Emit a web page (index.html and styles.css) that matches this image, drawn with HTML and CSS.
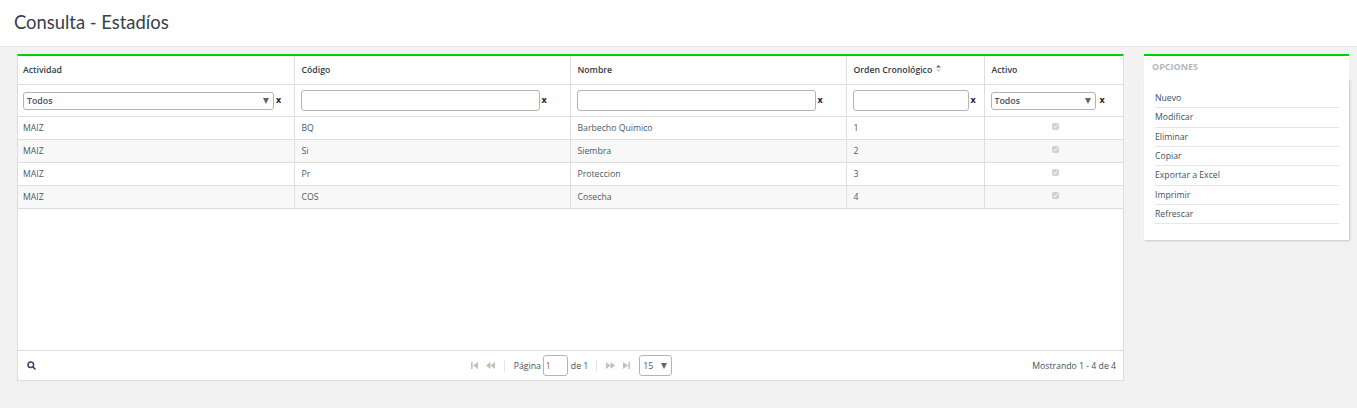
FILE: index.html
```html
<!DOCTYPE html>
<html lang="es">
<head>
<meta charset="utf-8">
<title>Consulta - Estadíos</title>
<link rel="stylesheet" href="styles.css">
</head>
<body>
<header class="page-head"><h1>Consulta - Estadíos</h1></header>
<main class="content">
  <section class="grid-panel">
    <div class="grid-body">
      <table class="grid">
        <colgroup><col class="c1"><col class="c2"><col class="c3"><col class="c4"><col class="c5"></colgroup>
        <thead>
          <tr class="head-row">
            <th>Actividad</th><th>Código</th><th>Nombre</th>
            <th>Orden Cronológico <svg class="sort" width="5" height="7" viewBox="0 0 5 7"><path d="M2.5 0L5 2.6H0z" fill="#666"/><path d="M2.5 7L0 4.4h5z" fill="#ccc"/></svg></th>
            <th>Activo</th>
          </tr>
          <tr class="filter-row">
            <td><div class="filter"><span class="select-wrap w-act"><select class="sel"><option>Todos</option></select></span><b class="clear">x</b></div></td>
            <td><div class="filter"><input class="txt w-text" type="text"><b class="clear">x</b></div></td>
            <td><div class="filter"><input class="txt w-text" type="text"><b class="clear">x</b></div></td>
            <td><div class="filter"><input class="txt w-ord" type="text"><b class="clear">x</b></div></td>
            <td><div class="filter"><span class="select-wrap w-on"><select class="sel"><option>Todos</option></select></span><b class="clear">x</b></div></td>
          </tr>
        </thead>
        <tbody>
          <tr><td>MAIZ</td><td>BQ</td><td>Barbecho Quimico</td><td>1</td><td class="chk"><input type="checkbox" checked disabled></td></tr>
          <tr class="alt"><td>MAIZ</td><td>Si</td><td>Siembra</td><td>2</td><td class="chk"><input type="checkbox" checked disabled></td></tr>
          <tr><td>MAIZ</td><td>Pr</td><td>Proteccion</td><td>3</td><td class="chk"><input type="checkbox" checked disabled></td></tr>
          <tr class="alt"><td>MAIZ</td><td>COS</td><td>Cosecha</td><td>4</td><td class="chk"><input type="checkbox" checked disabled></td></tr>
        </tbody>
      </table>
    </div>
    <footer class="pager">
      <div class="pager-left">
        <svg width="9" height="9" viewBox="0 0 9 9" fill="none" stroke="#2d4a66" stroke-width="1.5"><circle cx="3.8" cy="3.8" r="2.8"/><path d="M5.9 5.9L8.5 8.5"/></svg>
      </div>
      <div class="pager-center">
        <svg class="nav" width="7" height="7" viewBox="0 0 7 7"><path d="M0 0h1.6v7H0zM7 0v7L2 3.5z"/></svg>
        <svg class="nav nav-gap" width="9" height="7" viewBox="0 0 9 7"><path d="M4.5 0v7L0 3.5zM9 0v7L4.5 3.5z"/></svg>
        <span class="sep"></span>
        <span>Página</span>
        <input class="page-input" type="text" value="1">
        <span>de 1</span>
        <span class="sep sep-tight"></span>
        <svg class="nav" width="9" height="7" viewBox="0 0 9 7"><path d="M0 0v7l4.5-3.5zM4.5 0v7L9 3.5z"/></svg>
        <svg class="nav nav-gap" width="7" height="7" viewBox="0 0 7 7"><path d="M0 0v7l5-3.5zM5.4 0H7v7H5.4z"/></svg>
        <span class="select-wrap size"><select class="sel"><option>15</option></select></span>
      </div>
      <div class="pager-right">Mostrando 1 - 4 de 4</div>
    </footer>
  </section>
  <aside class="options">
    <h2>OPCIONES</h2>
    <div class="options-body">
      <ul>
        <li>Nuevo</li><li>Modificar</li><li>Eliminar</li><li>Copiar</li><li>Exportar a Excel</li><li>Imprimir</li><li>Refrescar</li>
      </ul>
    </div>
  </aside>
</main>
</body>
</html>
```
FILE: styles.css
```css
* { box-sizing: border-box; }
html, body { margin: 0; height: 100%; }
body {
  background: #f2f2f2;
  font-family: "Open Sans", "Liberation Sans", sans-serif;
  font-size: 8.7px;
  color: #44505c;
}
.page-head {
  height: 47px;
  background: #fff;
  border-bottom: 1px solid #e8e8e8;
  padding: 10px 0 0 14px;
}
.page-head h1 {
  margin: 0;
  font-family: Lato, "Liberation Sans", sans-serif;
  font-size: 18.4px;
  line-height: 24px;
  font-weight: 400;
  color: #36404a;
}
.content {
  display: flex;
  align-items: flex-start;
  gap: 20px;
  padding: 7px 0 0 17px;
}
.grid-panel {
  width: 1107px;
  height: 327px;
  display: flex;
  flex-direction: column;
  background: #fff;
  border: 1px solid #dcdcdc;
  border-top: 2px solid #00d000;
}
.grid-body { flex: 1; }
.grid {
  width: 1105px;
  table-layout: fixed;
  border-collapse: collapse;
}
.c1, .c2, .c3 { width: 276px; }
.c4 { width: 138px; }
.c5 { width: 139px; }
.grid th, .grid td {
  border: 1px solid #dedede;
  border-top: 0;
  padding: 0 5px 0 7px;
  text-align: left;
}
.grid th:first-child, .grid td:first-child { border-left: 0; padding-left: 5px; }
.head-row th {
  height: 28px;
  font-weight: 600;
  color: #2f3b47;
}
.sort { margin-left: 1px; vertical-align: 1px; }
.grid .filter-row td { height: 32px; padding-left: 6px; }
.grid .filter-row td:first-child { padding-left: 5px; }
.filter { display: flex; align-items: center; gap: 2px; }
.clear { font-size: 9px; line-height: 10px; color: #223; }
.w-act { flex: 0 0 251px; margin-top: 1px; }
.w-text { flex: 0 0 239px; }
.w-ord { flex: 0 0 116px; }
.w-on { flex: 0 0 105px; margin: 1px 2px 0 0; }
.select-wrap { position: relative; display: block; min-width: 0; }
.select-wrap::after {
  content: "";
  position: absolute;
  right: 5px;
  top: 6px;
  border: 3.5px solid transparent;
  border-top: 6px solid #666;
  border-bottom: 0;
}
.sel {
  display: block;
  width: 100%;
  height: 18px;
  appearance: none;
  background: #fff;
  border: 1px solid #b4b4b4;
  border-radius: 3px;
  padding: 0 3px;
  font: 600 8.8px "Open Sans", sans-serif;
  color: #44505c;
}
.txt {
  min-width: 0;
  height: 21px;
  border: 1px solid #b4b4b4;
  border-radius: 3px;
  background: #fff;
}
.grid tbody td { height: 23px; color: #4c5864; }
.grid tbody .alt td { background: #f8f8f8; }
.grid tbody .chk { text-align: center; padding: 0 0 0 4px; }
.chk input { width: 7px; height: 7px; margin: 0 0 4px; display: inline-block; vertical-align: middle; }
.pager {
  height: 30px;
  border-top: 1px solid #dedede;
  display: grid;
  grid-template-columns: 1fr auto 1fr;
  align-items: center;
  padding: 0 7px 0 9px;
}
.pager-left { display: flex; align-items: center; }
.pager-center { display: flex; align-items: center; }
.pager-right { text-align: right; }
.nav { fill: #c9bfb2; }
.nav-gap { margin-left: 8px; }
.sep { width: 1px; height: 12px; background: #e4e4e4; margin: 0 9px; }
.sep-tight { margin: 0 9px 0 8px; }
.page-input {
  width: 25px;
  height: 21px;
  margin: 0 3px 0 2px;
  padding: 0 2px;
  border: 1px solid #b4b4b4;
  border-radius: 3px;
  font: 8.7px "Open Sans", sans-serif;
  color: #a8603a;
}
.size { flex: 0 0 33px; margin-left: 9px; }
.size .sel { height: 21px; font-weight: 400; color: #4a5a70; }
.size::after { top: 8px; }
.options {
  width: 205px;
  border-top: 2px solid #00d000;
}
.options h2 {
  margin: 0;
  height: 23px;
  background: #fff;
  padding: 5px 8px 0;
  font-size: 9px;
  line-height: 12px;
  font-weight: 700;
  color: #b4b8bc;
}
.options-body {
  height: 161px;
  background: #fff;
  padding: 10px 10px 0 11px;
  box-shadow: 1px 1px 2px rgba(0,0,0,.18);
}
.options ul {
  list-style: none;
  margin: 0;
  padding: 0;
}
.options li {
  height: 19.33px;
  line-height: 19px;
  border-bottom: 1px solid #e6e6e6;
  color: #44505c;
}
```
